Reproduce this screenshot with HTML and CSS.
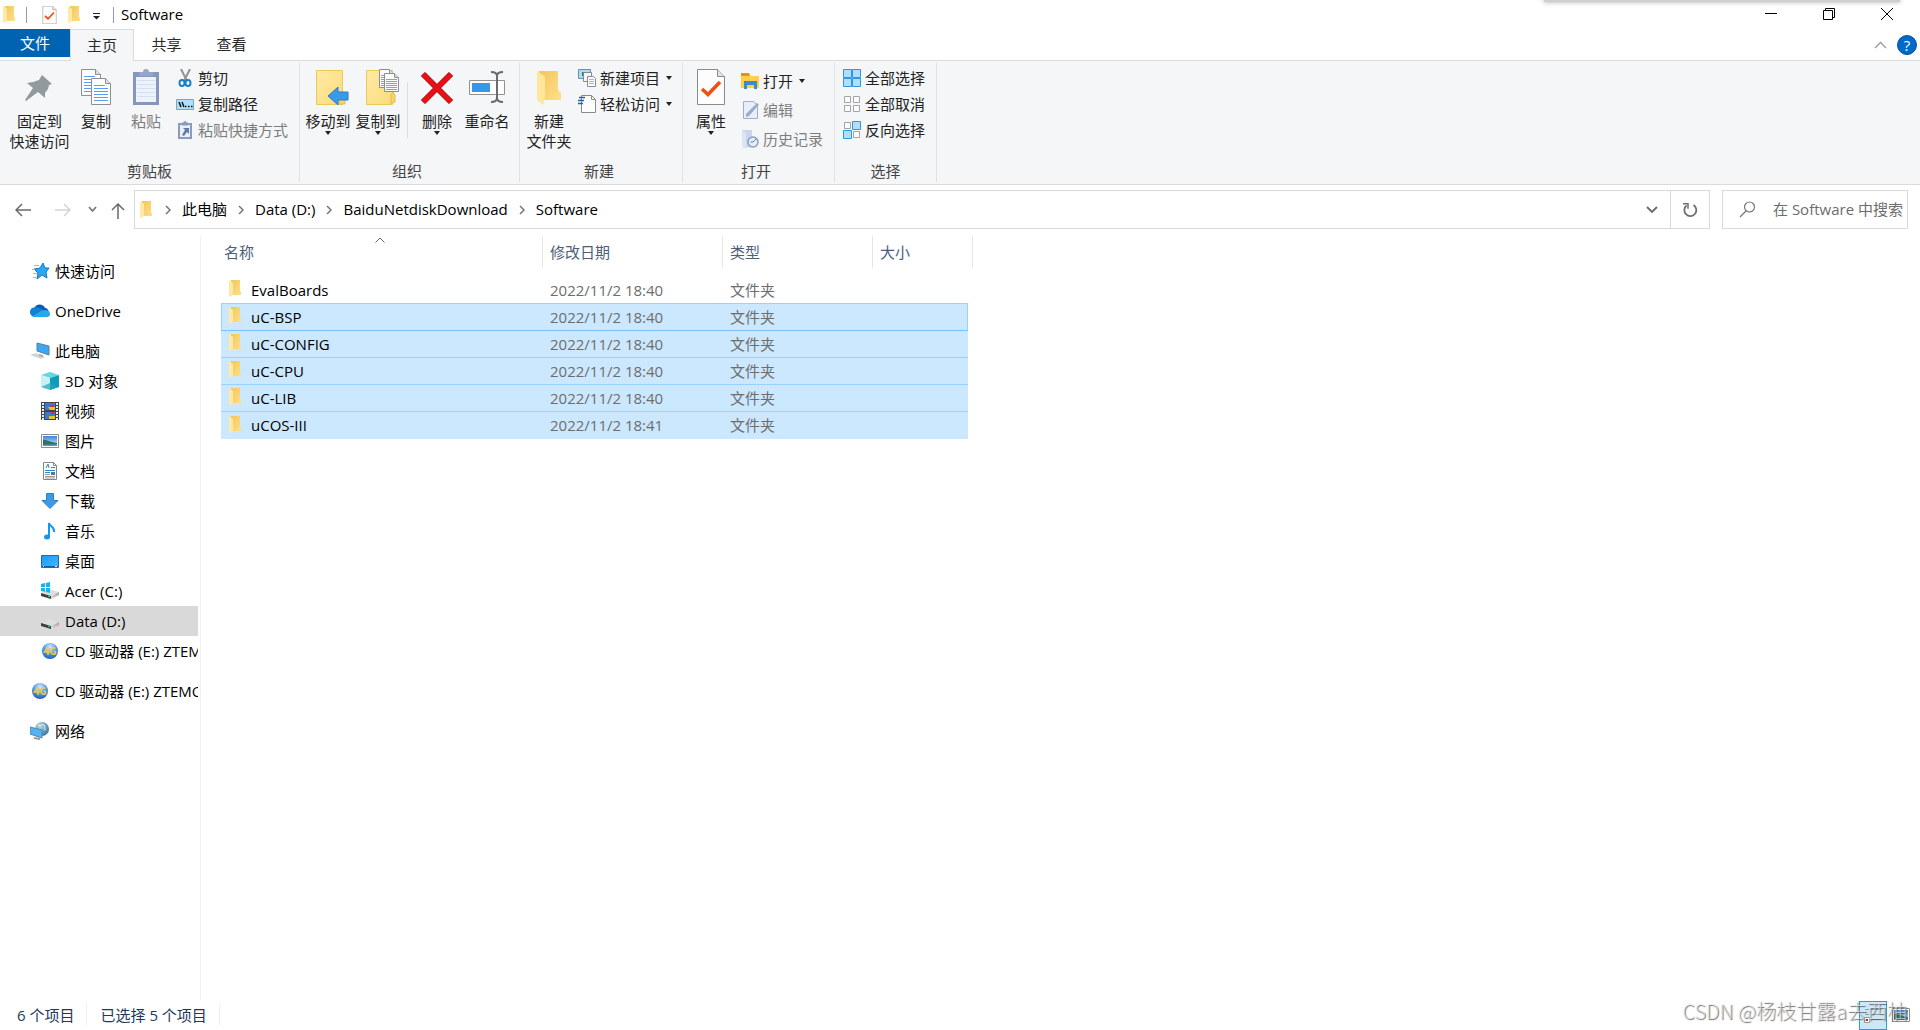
FILE: index.html
```html
<!DOCTYPE html>
<html lang="zh-CN">
<head>
<meta charset="utf-8">
<title>Software</title>
<link rel="stylesheet" href="styles.css">
</head>
<body>
<svg class="defs" aria-hidden="true">
  <defs>
    <linearGradient id="gFold" x1="0" x2="1" y1="0" y2="1"><stop offset="0" stop-color="#f1c75c"/><stop offset="1" stop-color="#ffdf8a"/></linearGradient>
    <linearGradient id="gBig" x1="0" x2="1" y1="0" y2="1"><stop offset="0" stop-color="#ffeaa6"/><stop offset="1" stop-color="#fbdc7c"/></linearGradient>
    <linearGradient id="gBlue" x1="0" x2="1" y1="0" y2="1"><stop offset="0" stop-color="#1c9cf5"/><stop offset="1" stop-color="#45b3ff"/></linearGradient>
    <linearGradient id="gDisk" x1="0" x2="1"><stop offset="0" stop-color="#d9d9d9"/><stop offset="1" stop-color="#a8a8a8"/></linearGradient>
    <radialGradient id="gCd" cx=".5" cy=".25" r=".8"><stop offset="0" stop-color="#d6ecff"/><stop offset=".5" stop-color="#4a9ce8"/><stop offset="1" stop-color="#1a55b5"/></radialGradient>
    <radialGradient id="gGlobe" cx=".35" cy=".3" r=".8"><stop offset="0" stop-color="#b9dcec"/><stop offset="1" stop-color="#2f6f94"/></radialGradient>
    <linearGradient id="gSky" x1="0" x2="0" y1="0" y2="1"><stop offset="0" stop-color="#3c86d8"/><stop offset="1" stop-color="#d5eefb"/></linearGradient>
  </defs>
  <symbol id="folder" viewBox="0 0 12 17"><path d="M2 0h9v11l1 1v3H2z" fill="url(#gFold)"/><path d="M0 0l4 3v11l-2 3-2-1z" fill="#ffe9a5"/></symbol>
  <symbol id="doc-check" viewBox="0 0 28 36"><path d="M.5.5h20l7 7v28H.5z" fill="#fdfdfd" stroke="#8a8a8a"/><path d="M20.500.5v7h7" fill="#e3e3e3" stroke="#8a8a8a"/><path d="M5 20l6 5.500L23 13" fill="none" stroke="#f0500f" stroke-width="3.500"/></symbol>
  <symbol id="doc-lines" viewBox="0 0 20 27"><path d="M.5.5h14l5 5v21H.5z" fill="#fdfdfd" stroke="#8e8e8e"/><path d="M14.500.5v5h5" fill="#e0e0e0" stroke="#8e8e8e"/><path d="M3 7.500h11M3 10.500h14M3 13.500h14M3 16.500h14M3 19.500h14M3 22.500h14" stroke="#5c9cf5"/></symbol>
  <symbol id="doc-small" viewBox="0 0 15 19"><path d="M.5.5h10l4 4v14H.5z" fill="#fdfdfd" stroke="#8e8e8e"/><path d="M10.500.5v4h4" fill="#e0e0e0" stroke="#8e8e8e"/><path d="M2 6.500h11M2 8.500h11M2 10.500h11M2 12.500h11M2 14.500h11M2 16.500h11" stroke="#6ba5f7"/></symbol>
  <symbol id="picture" viewBox="0 0 18 14"><path d="M.5.5h17v13H.5z" fill="#fff" stroke="#8d8d8d"/><path d="M2 2h14v10H2z" fill="url(#gSky)"/><path d="M2 6c3-1 5 2 14 3v3H2z" fill="#37705a"/><path d="M2 11c5-1 9 0 14-1v2H2z" fill="#5995c4"/></symbol>
  <symbol id="cd" viewBox="0 0 18 18"><circle cx="9" cy="9" r="8" fill="url(#gCd)"/><path d="M7 5L3.500 10H9M7 5v8M14.500 6.500c-2-1.500-4.500-.5-4.500 2.500s2.500 4 4.500 2.500V9.500h-2" fill="none" stroke="#f7c843" stroke-width="1.600"/></symbol>
  <symbol id="disk" viewBox="0 0 18 10"><path d="M0 4L8 0l10 3-8 4z" fill="#dedede"/><path d="M0 4l10 3v3L0 7z" fill="#3f3f3f"/><path d="M10 7l8-4v3l-8 4z" fill="url(#gDisk)"/><path d="M7 7.500h2" stroke="#3bd24f"/></symbol>
  <symbol id="chev" viewBox="0 0 8 10"><path d="M2 1l4 4-4 4" fill="none" stroke="#767676" stroke-width="1.500"/></symbol>
</svg>

<header>
  <div class="titlebar">
    <div class="overlay-shadow"></div>
    <svg class="t-folder" width="12" height="17"><use href="#folder"/></svg>
    <span class="t-sep"></span>
    <button class="qa qa-doc" aria-label="属性"><svg width="15" height="18"><use href="#doc-check"/></svg></button>
    <button class="qa qa-folder" aria-label="新建文件夹"><svg width="12" height="17"><use href="#folder"/></svg></button>
    <button class="qa qa-menu" aria-label="自定义快速访问工具栏"><svg width="7" height="7"><path d="M0 .5h7" stroke="#222"/><path d="M0 3h7L3.500 6.500z" fill="#222"/></svg></button>
    <span class="t-sep"></span>
    <h1>Software</h1>
    <div class="win">
      <button aria-label="最小化"><svg width="12" height="12"><path d="M0 5.500h12" stroke="#000"/></svg></button>
      <button aria-label="还原"><svg width="12" height="12"><path d="M.5 2.500h9v9h-9zM2.500 2.500v-2h9v9h-2" fill="none" stroke="#000"/></svg></button>
      <button aria-label="关闭"><svg width="12" height="12"><path d="M0 0l12 12M12 0L0 12" stroke="#000"/></svg></button>
    </div>
  </div>
  <nav class="tabs">
    <button class="tab file">文件</button>
    <button class="tab active">主页</button>
    <button class="tab">共享</button>
    <button class="tab">查看</button>
    <div class="tab-tools">
      <button aria-label="最小化功能区"><svg width="13" height="8"><path d="M1 7l5.500-5.500L12 7" fill="none" stroke="#999" stroke-width="1.300"/></svg></button>
      <button class="help" aria-label="帮助">?</button>
    </div>
  </nav>
</header>

<section class="ribbon">
  <div class="group clip">
    <div class="tools">
      <button class="big wide"><svg width="36" height="36"><path d="M20 6l10 9-3 1-1 4-3 4 0 5-7-6L4 32l-1-1 8-12-6-5 6-1 6-2z" fill="#919a9f"/></svg><span>固定到<br>快速访问</span></button>
      <button class="big"><svg width="30" height="36"><use href="#doc-lines" width="20" height="27"/><use href="#doc-lines" x="10" y="9" width="20" height="27"/></svg><span>复制</span></button>
      <button class="big off"><svg width="26" height="36"><path d="M0 3h26v33H0z" fill="#8597bd"/><path d="M3 8h20v25H3z" fill="#edf2fb"/><path d="M4 11.500h18M4 15.500h18M4 19.500h18M4 23.500h18M4 27.500h18" stroke="#d3dff2"/><path d="M6 3h4a3 3 0 016 0h4v4H6z" fill="#96a6c8"/></svg><span>粘贴</span></button>
      <div class="stack">
        <button class="small"><svg width="18" height="18"><path d="M5 0l6 12M14 0L8 12" stroke="#929292" stroke-width="2"/><ellipse cx="6" cy="14" rx="2.500" ry="3" fill="none" stroke="#1b7fc4" stroke-width="2"/><ellipse cx="12" cy="14" rx="2.500" ry="3" fill="none" stroke="#1b7fc4" stroke-width="2"/></svg>剪切</button>
        <button class="small"><svg width="18" height="18"><path d="M.5 4.500h17v10H.5z" fill="#ace0ff" stroke="#7da6bf"/><path d="M3 7l2 5M6 7l2 5" stroke="#111" stroke-width="1.500"/><path d="M9 11.500h1.500M12 11.500h1.500M15 11.500h1.500" stroke="#111" stroke-width="1.500"/></svg>复制路径</button>
        <button class="small off"><svg width="18" height="18"><path d="M3 3h12v14H3z" fill="#eaf0fa" stroke="#8a9bbd" stroke-width="2"/><path d="M6 4.500v-3h1.500a1.500 1.500 0 013 0H12v3z" fill="#8a9bbd"/><path d="M7 7h6v6l-2-2-3 4-2-1 3-5z" fill="#5f7cab"/></svg>粘贴快捷方式</button>
      </div>
    </div>
    <div class="caption">剪贴板</div>
  </div>

  <div class="group org">
    <div class="tools">
      <button class="big offset-icon"><svg width="36" height="36"><path d="M2.500 1.500h26v34h-26z" fill="url(#gBig)" stroke="#eacb55"/><path d="M25 26l3-3 3 3v9h-6z" fill="#f5d56a" stroke="#e3bf45"/><path d="M14 27l10-9v5h10v8H24v5z" fill="#3a9aea" stroke="#2b7fc4"/></svg><span>移动到</span><i class="drop"></i></button>
      <button class="big offset-icon"><svg width="36" height="36"><path d="M2.500 1.500h26v34h-26z" fill="url(#gBig)" stroke="#eacb55"/><path d="M27 26l2-3 2 3v7l-4 2z" fill="#f5d56a" stroke="#e3bf45"/><use href="#doc-small" x="15" y="0" width="15" height="19"/><use href="#doc-small" x="20" y="4" width="15" height="19"/></svg><span>复制到</span><i class="drop"></i></button>
      <span class="rule"></span>
      <button class="big"><svg width="36" height="36"><path d="M4 5l28 28M32 5L4 33" stroke="#a80d12" stroke-width="6"/><path d="M4 5l28 28M32 5L4 33" stroke="#e90f17" stroke-width="4.500"/></svg><span>删除</span><i class="drop"></i></button>
      <button class="big"><svg width="36" height="36"><path d="M.5 11.500h35v14H.5z" fill="#fff" stroke="#929292"/><path d="M3 14h18v9H3z" fill="#3397ea"/><path d="M22 3c4 0 6 1 6 4v22c0 3-2 4-6 4M34 3c-4 0-6 1-6 4v22c0 3 2 4 6 4" fill="none" stroke="#6b6b6b" stroke-width="2"/></svg><span>重命名</span></button>
    </div>
    <div class="caption">组织</div>
  </div>

  <div class="group new">
    <div class="tools">
      <button class="big"><svg width="26" height="36"><path d="M3 2h19v19l3 3v7H3z" fill="url(#gFold)"/><path d="M1 2l8 6v21l-2 7-6-5z" fill="#ffe69b"/></svg><span>新建<br>文件夹</span></button>
      <div class="stack">
        <button class="small"><svg width="18" height="18"><path d="M.5.5h12v9H.5z" fill="#a9dcf5" stroke="#6d8fa5"/><path d="M4 3h3v4H4z" fill="#36764f"/><path d="M5.500 3.500h8v9h-8z" fill="#f6f6f6" stroke="#888"/><path d="M9.500 7.500h6l2 2v8h-8z" fill="#fff" stroke="#8a8a9a"/><path d="M11 10.500h5M11 12.500h5M11 14.500h5" stroke="#a0b8e8"/></svg>新建项目<i class="drop"></i></button>
        <button class="small"><svg width="18" height="18"><path d="M3.500.5h10l4 4v13h-14z" fill="#fdfdfd" stroke="#8a8a8a"/><path d="M13.500.5v4h4" fill="none" stroke="#8a8a8a"/><path d="M1 2.500h6M0 5.500h6M-1 8.500h6" stroke="#1d66ad" stroke-width="1.500"/></svg>轻松访问<i class="drop"></i></button>
      </div>
    </div>
    <div class="caption">新建</div>
  </div>

  <div class="group open">
    <div class="tools">
      <button class="big"><svg width="28" height="36"><use href="#doc-check"/></svg><span>属性</span><i class="drop"></i></button>
      <div class="stack loose">
        <button class="small"><svg width="18" height="18"><path d="M0 1h8l1 3h9v12H0z" fill="#ffcf48"/><path d="M0 1h8l1 3H0z" fill="#d99714"/><path d="M3 9h13v8h-3v-4H6v4H3z" fill="#348bd6"/></svg>打开<i class="drop"></i></button>
        <button class="small off"><svg width="18" height="18"><path d="M2.500.5h10l4 4v13h-14z" fill="#e9effa" stroke="#a0aecb"/><path d="M5 13L16 2l2 1.500L8 15l-3 1z" fill="#9bacc9"/></svg>编辑</button>
        <button class="small off"><svg width="18" height="18"><path d="M1 0h10v17l-8 1-2-2z" fill="#c9d5ea"/><path d="M1 0l4 3v15l-4-2z" fill="#dbe5f4"/><circle cx="12" cy="12" r="5" fill="#e6edf7" stroke="#8c9dbd" stroke-width="1.500"/><path d="M12 12l3-3M12 12H9.500" stroke="#6d83ab"/></svg>历史记录</button>
      </div>
    </div>
    <div class="caption">打开</div>
  </div>

  <div class="group sel">
    <div class="tools">
      <div class="stack">
        <button class="small"><svg width="18" height="18"><path d="M.5.5h8v8h-8zM9.500.5h8v8h-8zM.5 9.500h8v8h-8zM9.500 9.500h8v8h-8z" fill="#aedfff" stroke="#3195e0"/></svg>全部选择</button>
        <button class="small"><svg width="18" height="18"><path d="M1.500 1.500h6v6h-6zM10.500 1.500h6v6h-6zM1.500 10.500h6v6h-6zM10.500 10.500h6v6h-6z" fill="#fbfbfb" stroke="#a3a3a3"/></svg>全部取消</button>
        <button class="small"><svg width="18" height="18"><path d="M1.500 1.500h6v6h-6zM10.500 10.500h6v6h-6z" fill="#fbfbfb" stroke="#a3a3a3"/><path d="M9.500.5h8v8h-8zM.5 9.500h8v8h-8z" fill="#aedfff" stroke="#3195e0"/></svg>反向选择</button>
      </div>
    </div>
    <div class="caption">选择</div>
  </div>
</section>

<div class="address">
  <div class="navs">
    <button aria-label="后退"><svg width="17" height="14"><path d="M1 7h15M7 1L1 7l6 6" fill="none" stroke="#6a6a6a" stroke-width="1.500"/></svg></button>
    <button aria-label="前进"><svg width="17" height="14"><path d="M1 7h15M10 1l6 6-6 6" fill="none" stroke="#d3d3d3" stroke-width="1.500"/></svg></button>
    <button class="hist" aria-label="最近浏览的位置"><svg width="9" height="7"><path d="M1 1l3.500 4L8 1" fill="none" stroke="#767676" stroke-width="1.700"/></svg></button>
    <button class="up" aria-label="上移"><svg width="14" height="17"><path d="M7 16V1M1 7l6-6 6 6" fill="none" stroke="#6a6a6a" stroke-width="1.500"/></svg></button>
  </div>
  <div class="path">
    <svg class="p-folder" width="12" height="17"><use href="#folder"/></svg>
    <svg class="sep" width="8" height="10"><use href="#chev"/></svg><a href="#pc">此电脑</a>
    <svg class="sep" width="8" height="10"><use href="#chev"/></svg><a href="#d">Data (D:)</a>
    <svg class="sep" width="8" height="10"><use href="#chev"/></svg><a href="#b">BaiduNetdiskDownload</a>
    <svg class="sep" width="8" height="10"><use href="#chev"/></svg><a href="#s">Software</a>
    <button class="p-drop" aria-label="以前的位置"><svg width="12" height="8"><path d="M1 1l5 5 5-5" fill="none" stroke="#6a6a6a" stroke-width="1.800"/></svg></button>
    <button class="p-ref" aria-label="刷新"><svg width="16" height="16"><path d="M4.500 3.500A6 6 0 1 0 11.500 3" fill="none" stroke="#6f6f6f" stroke-width="1.800"/><path d="M1 1.800h5v5" fill="none" stroke="#6f6f6f" stroke-width="1.500"/></svg></button>
  </div>
  <label class="search"><svg width="17" height="17"><circle cx="10.500" cy="6" r="5" fill="none" stroke="#777" stroke-width="1.200"/><path d="M7 10l-6 6" stroke="#777" stroke-width="1.200"/></svg><input type="text" aria-label="搜索" placeholder="在 Software 中搜索"></label>
</div>

<main>
  <nav class="side">
    <a class="top" href="#q"><svg width="20" height="18"><path d="M13 1l2 5 4 0-3 4 1 6-5-3-5 4 1-6-4-4 6-1z" fill="#2fa5f2" stroke="#1577c2"/><path d="M4 3.500h5M2 7.500h3M3 11.500h4M3 15.500h3" stroke="#7cc6f5"/></svg><span>快速访问</span></a>
    <a class="top gap" href="#o"><svg width="20" height="18"><path d="M5 14a5 5 0 010-9c2-4 9-3 10 1 4 0 5 6 2 8z" fill="#0a5cb4"/><path d="M2 6c4-2 8 0 13 3l-9 6H4C-1 14-1 8 2 6z" fill="#1280d4"/><path d="M3 14l8-5c4-2 9-1 9 3 0 2-1 3-3 3H5z" fill="#28a8ea"/></svg><span>OneDrive</span></a>
    <a class="top gap" href="#pc"><svg width="20" height="18"><path d="M7 1l12 3v9L7 9z" fill="#3da8f2" stroke="#5e7f99"/><path d="M0 13l6-2 9 4-4 2z" fill="#cfd5da"/><path d="M9 12l4 1v2l-4-1z" fill="#a3adb5"/></svg><span>此电脑</span></a>
    <a href="#3d"><svg width="18" height="18"><path d="M0 3l9-3 9 3-9 3z" fill="#65d6de"/><path d="M0 3l9 3v12l-9-3z" fill="#c6f3f2"/><path d="M9 6l9-3v12l-9 3z" fill="#0e9cb9"/><path d="M0 15l9-4 9 4-9 3z" fill="#22a7b8" opacity=".7"/></svg><span>3D 对象</span></a>
    <a href="#v"><svg width="18" height="18"><path d="M0 0h18v18H0z" fill="#444"/><path d="M4 1h10v7H4zM4 10h10v7H4z" fill="#3b78d8"/><path d="M2 1v17M16 1v17" stroke="#eee" stroke-width="2" stroke-dasharray="2 1"/><path d="M7 5h7v3H9zM8 14h6v3H8z" fill="#e6c326"/><path d="M9 3h4v2H9zM10 10h3v2h-3z" fill="#d8302a"/></svg><span>视频</span></a>
    <a href="#p"><svg width="18" height="14"><use href="#picture"/></svg><span>图片</span></a>
    <a href="#doc"><svg width="18" height="18"><path d="M2.500.5h10l3 3v14h-13z" fill="#fff" stroke="#858585"/><path d="M12.500.5v3h3" fill="none" stroke="#858585"/><path d="M5 6l2-4 1 4M10 5.500h4M4 8.500h10M4 10.500h5" fill="none" stroke="#2786d1"/><path d="M4 12.500h5M4 14.500h10M4 16h10" stroke="#999"/><path d="M10 10h4v3h-4z" fill="#3c7eb4"/></svg><span>文档</span></a>
    <a href="#dl"><svg width="18" height="18"><path d="M5.500 1.500h7v7h4.500l-8 8-8-8h4.500z" fill="#3d9ae8" stroke="#2d7fc5"/></svg><span>下载</span></a>
    <a href="#m"><svg width="18" height="18"><ellipse cx="6" cy="15" rx="3" ry="2.500" fill="#1496ec"/><path d="M8 15V1c1 4 6 4 5 9" fill="none" stroke="#1496ec" stroke-width="2"/></svg><span>音乐</span></a>
    <a href="#desk"><svg width="18" height="13"><path d="M.5.5h17v12H.5z" fill="url(#gBlue)" stroke="#1270b8"/><path d="M1 11.500h16" stroke="#0c5c9e"/><path d="M2 11.500h1M14 11.500h2" stroke="#fff"/></svg><span>桌面</span></a>
    <a href="#c"><svg width="18" height="18"><use href="#disk" y="7" width="18" height="10"/><path d="M0 2l4-1v4H0zM5 1l4-1v5H5zM0 6h4v4l-4-1zM5 6h4v5l-4-1z" fill="#12b4f2"/></svg><span>Acer (C:)</span></a>
    <a class="cur" href="#d"><svg width="18" height="18"><use href="#disk" y="7" width="18" height="10"/></svg><span>Data (D:)</span></a>
    <a href="#e"><svg width="18" height="18"><use href="#cd"/></svg><span>CD 驱动器 (E:) ZTEMODEM</span></a>
    <a class="top gap" href="#e2"><svg width="20" height="18"><use href="#cd"/></svg><span>CD 驱动器 (E:) ZTEMODEM</span></a>
    <a class="top gap" href="#n"><svg width="20" height="18"><circle cx="12" cy="7" r="7" fill="url(#gGlobe)"/><path d="M8 3c3 1 4-1 6 0s-1 4 2 5" stroke="#e3f3fa" fill="none"/><path d="M0 5l12 3v8L0 12z" fill="#4fb4f5" stroke="#5b88a8"/><path d="M4 16l6 1" stroke="#999" stroke-width="2"/></svg><span>网络</span></a>
  </nav>
  <section class="files">
    <table>
      <colgroup><col class="c-name"><col class="c-date"><col class="c-type"><col class="c-size"></colgroup>
      <thead><tr><th>名称<svg class="sort" width="10" height="6"><path d="M.5 5.500L5 1l4.500 4.500" fill="none" stroke="#666"/></svg></th><th>修改日期</th><th>类型</th><th>大小</th></tr></thead>
      <tbody>
        <tr><td><svg width="12" height="17"><use href="#folder"/></svg>EvalBoards</td><td>2022/11/2 18:40</td><td>文件夹</td><td></td></tr>
        <tr class="on focus"><td><svg width="12" height="17"><use href="#folder"/></svg>uC-BSP</td><td>2022/11/2 18:40</td><td>文件夹</td><td></td></tr>
        <tr class="on"><td><svg width="12" height="17"><use href="#folder"/></svg>uC-CONFIG</td><td>2022/11/2 18:40</td><td>文件夹</td><td></td></tr>
        <tr class="on"><td><svg width="12" height="17"><use href="#folder"/></svg>uC-CPU</td><td>2022/11/2 18:40</td><td>文件夹</td><td></td></tr>
        <tr class="on"><td><svg width="12" height="17"><use href="#folder"/></svg>uC-LIB</td><td>2022/11/2 18:40</td><td>文件夹</td><td></td></tr>
        <tr class="on"><td><svg width="12" height="17"><use href="#folder"/></svg>uCOS-III</td><td>2022/11/2 18:41</td><td>文件夹</td><td></td></tr>
      </tbody>
    </table>
  </section>
</main>

<footer>
  <span class="st">6 个项目</span><span class="st">已选择 5 个项目</span>
  <div class="views">
    <button class="view on" aria-label="详细信息"><svg width="18" height="18"><path d="M1 3.500h4M7 3.500h10M1 8.500h4M7 8.500h10M7 13.500h10" stroke="#8aa0ae"/><path d="M.5 11.500h5v5h-5z" fill="#fff" stroke="#999"/><path d="M2 13h2v2H2z" fill="#b52a1d"/></svg></button>
    <button class="view" aria-label="大缩略图"><svg width="18" height="14"><use href="#picture"/></svg></button>
  </div>
  <div class="mark">CSDN @杨枝甘露a去西柚</div>
</footer>
</body>
</html>
```
FILE: styles.css
```css
* { box-sizing: border-box; }
body {
  margin: 0;
  min-height: 100vh;
  display: flex;
  flex-direction: column;
  background: #fff;
  color: #000;
  font: 15px/20px "Open Sans", "Noto Sans CJK SC", sans-serif;
  overflow-x: hidden;
}
button {
  margin: 0;
  padding: 0;
  border: 0;
  background: none;
  color: inherit;
  font: inherit;
  white-space: nowrap;
}
a { color: inherit; text-decoration: none; }
svg { display: block; flex: none; }
.defs { position: absolute; width: 0; height: 0; }

.titlebar { position: relative; display: flex; align-items: center; height: 29px; padding-left: 3px; }
.overlay-shadow {
  position: absolute;
  top: -4px;
  right: 20px;
  width: 356px;
  height: 6px;
  background: #cfcfcf;
  box-shadow: 0 0 5px #aaa;
}
.t-sep { width: 1px; height: 16px; background: #9b9b9b; }
.t-folder { margin-right: 11px; }
.qa-doc { margin-left: 15px; }
.qa-folder { margin-left: 11px; }
.qa-menu { margin: 4px 13px 0; }
h1 { margin: 0 0 2px 7px; font-size: 15px; font-weight: 400; }
.win { display: flex; margin-left: auto; padding-right: 4px; }
.win button { display: flex; align-items: center; justify-content: center; width: 58px; height: 29px; padding-bottom: 2px; }

.tabs { display: flex; height: 32px; border-bottom: 1px solid #d9dbdc; }
.tab { width: 65px; height: 32px; padding-bottom: 2px; color: #2b2b2b; }
.tab.file { width: 70px; height: 28px; padding: 0; background: #0063b1; color: #fff; }
.tab.active { width: 64px; border: 1px solid #d9dbdc; border-bottom: 0; background: #f5f6f7; }
.tab-tools { display: flex; align-items: center; gap: 10px; margin-left: auto; padding-right: 3px; }
.help {
  width: 20px;
  height: 20px;
  border: 1px solid #0a4f93;
  border-radius: 50%;
  background: #0069cc;
  color: #fff;
  line-height: 18px;
}

.ribbon { display: flex; height: 124px; border-bottom: 1px solid #d9dbdc; background: #f5f6f7; padding-top: 2px; color: #222; }
.group { display: flex; flex-direction: column; height: 119px; border-right: 1px solid #e0e2e4; }
.tools { display: flex; flex: 1; }
.caption { height: 21px; margin-right: 8px; text-align: center; color: #444; }
.clip { width: 300px; padding-left: 8px; }
.org { width: 220px; padding-left: 3px; }
.new { width: 163px; padding-left: 4px; }
.open { width: 152px; padding-left: 3px; }
.sel { width: 102px; padding-left: 8px; }
.big { display: flex; flex-direction: column; align-items: center; width: 50px; padding-top: 6px; color: #222; }
.big.wide { width: 63px; }
.big span { margin-top: 6px; }
.offset-icon svg { margin-left: 7px; }
.stack { display: flex; flex-direction: column; gap: 6px; padding: 5px 0 0 5px; }
.new .stack { padding-left: 4px; }
.sel .stack { padding-left: 0; }
.stack.loose { gap: 9px; padding-top: 8px; }
.small { display: flex; align-items: center; gap: 4px; height: 20px; }
.off { color: #7d7d7d; }
.big.off { color: #7d7d7d; }
.drop { width: 0; height: 0; border: 4px solid transparent; border-width: 4px 3px 0; border-top-color: #222; }
.small .drop { margin-left: 2px; }
.rule { width: 1px; height: 56px; margin: 19px 4px 0; background: #dcdee0; }

.address { display: flex; align-items: center; height: 51px; padding: 0 12px 2px 15px; }
.navs { display: flex; align-items: center; width: 119px; }
.navs button { margin-right: 22px; }
.navs .hist { margin: 0 14px 0 -5px; }
.navs .up { margin: 3px 0 0; }
.path { display: flex; align-items: center; flex: 1; height: 39px; border: 1px solid #d9d9d9; padding-left: 5px; }
.path a { margin-bottom: 2px; }
.p-folder { margin-right: 2px; }
.sep { margin: 0 10px; }
.p-drop { display: flex; margin-left: auto; padding: 12px; }
.p-ref { display: flex; align-items: center; justify-content: center; width: 39px; height: 37px; border-left: 1px solid #d9d9d9; }
.search { display: flex; align-items: center; width: 186px; height: 39px; margin-left: 12px; border: 1px solid #d9d9d9; padding-left: 16px; }
.search input { flex: 1; min-width: 0; margin: 0 0 2px 17px; padding: 0; border: 0; outline: 0; background: none; font: inherit; }
.search input::placeholder { color: #6d6d6d; opacity: 1; }

main { display: flex; flex: 1; }
.side { width: 201px; padding: 20px 2px 0 0; border-right: 1px solid #f0f0f0; }
.side a { display: flex; align-items: center; gap: 6px; height: 30px; padding-left: 41px; overflow: hidden; white-space: nowrap; }
.side a.top { gap: 5px; padding-left: 30px; }
.side .gap { margin-top: 10px; }
.side .cur { background: #d9d9d9; }

.files { flex: 1; padding-left: 20px; }
table { width: 752px; table-layout: fixed; border-spacing: 0; }
.c-name { width: 322px; }
.c-date { width: 180px; }
.c-type { width: 150px; }
.c-size { width: 100px; }
th { position: relative; height: 32px; padding: 0 0 0 7px; border-right: 1px solid #e5e5e5; color: #4c607a; font-weight: 400; text-align: left; }
th:first-child { padding-left: 3px; }
.sort { position: absolute; top: 1px; left: 50%; margin-left: -7px; }
tbody::before { content: ""; display: block; height: 8px; }
td { height: 27px; padding: 0 0 0 7px; color: #6d6d6d; }
td:first-child { display: flex; align-items: center; gap: 10px; padding-left: 8px; color: #000; }
td:first-child svg { margin-bottom: 2px; }
td:last-child { border-right: 5px solid #fff; }
.on td { background: #cce8ff; box-shadow: inset 0 1px #99d1ff; }
.on:last-child td { height: 28px; }
.focus + .on td { box-shadow: inset 0 1px #7ac1fb; }
.focus td:first-child { box-shadow: inset 1px 1px #99d1ff; }
.focus td:last-child { box-shadow: inset -1px 1px #99d1ff; }

footer { position: relative; display: flex; align-items: center; height: 30px; padding-left: 17px; color: #1e395b; }
.st { height: 20px; margin-right: 13px; padding-right: 12px; border-right: 1px solid #eee; }
.views { display: flex; align-items: center; margin-left: auto; padding-right: 5px; }
.view { display: flex; align-items: center; justify-content: center; width: 28px; height: 29px; }
.view.on { border: 1px solid #26a0da; background: #cce8f6; }
.mark {
  position: absolute;
  right: 13px;
  bottom: 5px;
  color: rgba(240, 240, 240, .6);
  font: 20px/28px "Noto Sans CJK SC", sans-serif;
  font-weight: 300;
  text-shadow: 1px 1px 1px rgba(70, 70, 70, .8);
  white-space: nowrap;
}
```
